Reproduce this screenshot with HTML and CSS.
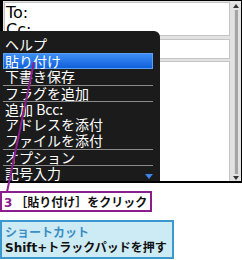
FILE: index.html
```html
<!DOCTYPE html>
<html lang="ja">
<head>
<meta charset="UTF-8">
<title>貼り付け</title>
<link rel="stylesheet" href="styles.css">
</head>
<body>
<div class="page">
    <div class="device">
        <div class="screen">
            <div class="fields">
                <div class="field field-to">
                    <div>To:</div>
                    <div>Cc:</div>
                </div>
                <div class="field field-cc"></div>
                <div class="field field-body"></div>
            </div>
            <div class="scrollbar">
                <span class="arrow up"></span>
                <span class="track"></span>
                <span class="arrow down"></span>
            </div>
        </div>
        <ul class="menu">
            <li>ヘルプ</li>
            <li class="active">貼り付け</li>
            <li>下書き保存</li>
            <li class="sep">フラグを追加</li>
            <li class="sep">追加 Bcc:</li>
            <li>アドレスを添付</li>
            <li>ファイルを添付</li>
            <li class="sep">オプション</li>
            <li class="sep">記号入力</li>
        </ul>
        <span class="more"></span>
    </div>
    <svg class="leader" width="242" height="200" viewBox="0 0 242 200">
        <line x1="34" y1="62" x2="7" y2="192" stroke="#8a1e8c" stroke-width="2"/>
    </svg>
    <div class="step"><span class="num">3</span>［貼り付け］をクリック</div>
    <div class="tip">
        <div class="tip-title">ショートカット</div>
        <div class="tip-text">Shift+トラックパッドを押す</div>
    </div>
</div>
</body>
</html>
```

FILE: styles.css
```css
* {
    margin: 0;
    padding: 0;
    box-sizing: border-box;
}
body {
    background: #fff;
    font-family: "DejaVu Sans", "Noto Sans CJK JP", sans-serif;
}
.page {
    position: relative;
    width: 242px;
    height: 260px;
}
.device {
    position: relative;
    height: 183px;
    background: #000;
    padding: 1px 1px 2px 3px;
}
.screen {
    height: 180px;
    background: #e2e2e2;
    display: flex;
    padding: 1px 2px 0 1px;
}
.fields {
    flex: 1;
    display: flex;
    flex-direction: column;
}
.field {
    background: #fff;
    border: 1px solid #c4c4c4;
    border-bottom: none;
    font-size: 16px;
    line-height: 17px;
    padding: 1px 0 0 1px;
    color: #000;
}
.field-to {
    height: 34px;
    border-bottom: 1px solid #c4c4c4;
}
.field-cc {
    height: 20px;
    margin-top: 3px;
    border-bottom: 1px solid #c4c4c4;
}
.field-body {
    flex: 1;
    margin-top: 2px;
}
.scrollbar {
    width: 7px;
    margin-left: 2px;
    display: flex;
    flex-direction: column;
    align-items: center;
    padding: 2px 0 1px;
}
.track {
    flex: 1;
    width: 4px;
    margin: 2px 0;
    background: #a4a4a4;
    border-left: 1px solid #d8d8d8;
}
.arrow {
    width: 0;
    height: 0;
    border-left: 3px solid transparent;
    border-right: 3px solid transparent;
}
.arrow.up {
    border-bottom: 4px solid #333;
}
.arrow.down {
    border-top: 4px solid #333;
}
.menu {
    position: absolute;
    left: 0;
    top: 31px;
    width: 160px;
    height: 150px;
    list-style: none;
    background: #1b1b1b;
    border-top-right-radius: 6px;
    padding: 6px 0 0 3px;
    font-family: "Noto Sans CJK JP", sans-serif;
    font-size: 14px;
    color: #fff;
}
.menu li {
    width: 150px;
    height: 16px;
    line-height: 15px;
    padding-left: 2px;
    white-space: nowrap;
}
.menu li.sep {
    border-top: 1px solid #8c8c8c;
}
.menu li.active {
    background: linear-gradient(#3d8ff5, #1160dc);
    border: 1px solid #5aa0f0;
    padding-left: 1px;
    line-height: 14px;
}
.more {
    position: absolute;
    left: 145px;
    top: 174px;
    width: 0;
    height: 0;
    border-left: 4px solid transparent;
    border-right: 4px solid transparent;
    border-top: 5px solid #3b86e6;
}
.leader {
    position: absolute;
    left: 0;
    top: 0;
}
.step {
    margin-top: 8px;
    width: 152px;
    height: 21px;
    border: 2px solid #8a1e8c;
    padding-left: 2px;
    font-family: "Noto Sans CJK JP", sans-serif;
    font-weight: bold;
    font-size: 12px;
    line-height: 17px;
    color: #111;
    white-space: nowrap;
}
.step .num {
    font-family: "DejaVu Sans", sans-serif;
    color: #8a1e8c;
    margin-right: 3px;
}
.tip {
    margin-top: 8px;
    width: 174px;
    height: 39px;
    background: #cdebf4;
    border: 2px solid #3c97cf;
    padding: 2px 0 0 3px;
    font-family: "Noto Sans CJK JP", sans-serif;
    font-weight: bold;
    font-size: 12px;
    line-height: 16px;
    color: #111;
    white-space: nowrap;
}
.tip-title {
    color: #3a8dc5;
}
.tip-text {
    font-family: "DejaVu Sans", "Noto Sans CJK JP", sans-serif;
}
```
